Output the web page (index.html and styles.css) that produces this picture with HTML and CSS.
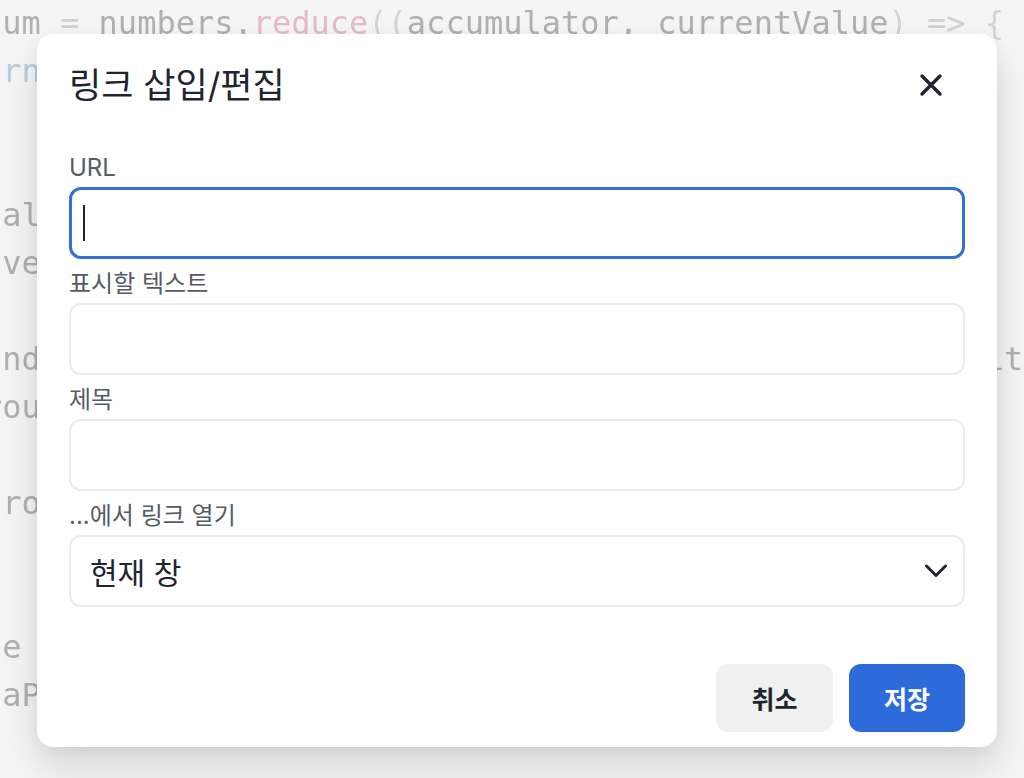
FILE: index.html
```html
<!DOCTYPE html>
<html lang="ko">
<head>
<meta charset="utf-8">
<title>링크 삽입/편집</title>
<link rel="stylesheet" href="styles.css">
</head>
<body>
<div class="editor">
<pre class="code"><span class="kw">const</span> sum <span class="op">=</span> numbers.<span class="fn">reduce</span><span class="p">((</span>accumulator, currentValue<span class="p">)</span> <span class="op">=&gt;</span> <span class="p">{</span>
   <span class="kw">return</span> accumulator <span class="op">+</span> currentValue;
<span class="p">}</span>, 0);

  initialValue <span class="op">=</span> sum;
<span class="kw">const</span> average <span class="op">=</span> sum / numbers.length;

<span class="kw">const</span> index <span class="op">=</span> numbers.<span class="fn">findIndex</span>((val) <span class="op">=&gt;</span> val <span class="op">&gt;=</span> averageLimit);
<span class="kw">const</span> rounded <span class="op">=</span> Math.<span class="fn">round</span>(average);

  <span class="kw">if</span> (!rounded) {
  }

   value <span class="op">=</span> rounded;
    dataPoints.<span class="fn">push</span>(value);
</pre>
</div>

<div class="dialog" role="dialog" aria-label="링크 삽입/편집">
  <div class="dialog-header">
    <h2 class="dialog-title">링크 삽입/편집</h2>
    <button class="close-btn" aria-label="닫기">
      <svg width="24" height="24" viewBox="0 0 24 24" fill="none" stroke="#1f2530" stroke-width="3.4" stroke-linecap="round">
        <path d="M3 3 L21 21 M21 3 L3 21"/>
      </svg>
    </button>
  </div>
  <div class="form">
    <div class="field">
      <div class="label">URL</div>
      <div class="input focused"><span class="caret"></span></div>
    </div>
    <div class="field">
      <div class="label">표시할 텍스트</div>
      <div class="input"></div>
    </div>
    <div class="field">
      <div class="label">제목</div>
      <div class="input"></div>
    </div>
    <div class="field">
      <div class="label">...에서 링크 열기</div>
      <div class="input select">
        <span class="select-value">현재 창</span>
        <svg width="24" height="14" viewBox="0 0 24 14" fill="none" stroke="#1f2530" stroke-width="3" stroke-linecap="round" stroke-linejoin="round">
          <path d="M2.5 2 L12 11.5 L21.5 2"/>
        </svg>
      </div>
    </div>
  </div>
  <div class="actions">
    <button class="btn btn-cancel">취소</button>
    <button class="btn btn-save">저장</button>
  </div>
</div>
</body>
</html>
```

FILE: styles.css
```css
html, body {
  margin: 0;
  padding: 0;
}

body {
  width: 1024px;
  height: 778px;
  overflow: hidden;
  background: #f5f5f5;
  font-family: Inter, "Noto Sans CJK KR", sans-serif;
}

.editor {
  height: 778px;
  overflow: hidden;
}

.code {
  margin: -1px 0 0 -132.6px;
  font-family: "DejaVu Sans Mono", monospace;
  font-size: 32px;
  line-height: 48px;
  color: #b0b0b0;
  white-space: pre;
  filter: blur(0.5px);
}

.code .kw { color: #bacbdc; }
.code .fn { color: #e4bcc6; }
.code .op { color: #d0d0d0; }
.code .p { color: #d4d4d4; }

.dialog {
  position: absolute;
  left: 37px;
  top: 34px;
  width: 960px;
  height: 713px;
  box-sizing: border-box;
  padding: 29px 32px 15px;
  background: #ffffff;
  border-radius: 16px;
  box-shadow: 0 22px 40px rgba(0, 0, 0, 0.12), 0 4px 14px rgba(0, 0, 0, 0.05);
  display: flex;
  flex-direction: column;
}

.dialog-header {
  display: flex;
  align-items: center;
  justify-content: space-between;
  height: 44px;
}

.dialog-title {
  margin: 0;
  font-size: 35px;
  font-weight: 400;
  line-height: 44px;
  color: #1f2530;
}

.close-btn {
  width: 44px;
  height: 44px;
  margin-right: 12px;
  padding: 0;
  border: 0;
  background: none;
  display: flex;
  align-items: center;
  justify-content: center;
}

.form {
  margin-top: 47px;
  display: flex;
  flex-direction: column;
  gap: 11px;
}

.field {
  display: flex;
  flex-direction: column;
  gap: 5px;
}

.label {
  font-size: 24px;
  line-height: 28px;
  color: #565c66;
}

.input {
  height: 72px;
  box-sizing: border-box;
  border: 2px solid #ececec;
  border-radius: 12px;
  background: #ffffff;
}

.input.focused {
  border: 3px solid #3470d6;
  padding-left: 11px;
  display: flex;
  align-items: center;
}

.caret {
  width: 2px;
  height: 36px;
  background: #1f2530;
}

.select {
  display: flex;
  align-items: center;
  justify-content: space-between;
  padding: 0 15px 0 19px;
}

.select-value {
  font-size: 30px;
  color: #1f2530;
}

.actions {
  margin-top: 57px;
  display: flex;
  justify-content: flex-end;
  gap: 16px;
}

.btn {
  height: 68px;
  border: 0;
  border-radius: 12px;
  font-family: inherit;
  font-size: 25px;
  font-weight: 700;
}

.btn-cancel {
  width: 117px;
  background: #f0f0f0;
  color: #1f2530;
}

.btn-save {
  width: 116px;
  background: #2d6bdb;
  color: #ffffff;
}
```
